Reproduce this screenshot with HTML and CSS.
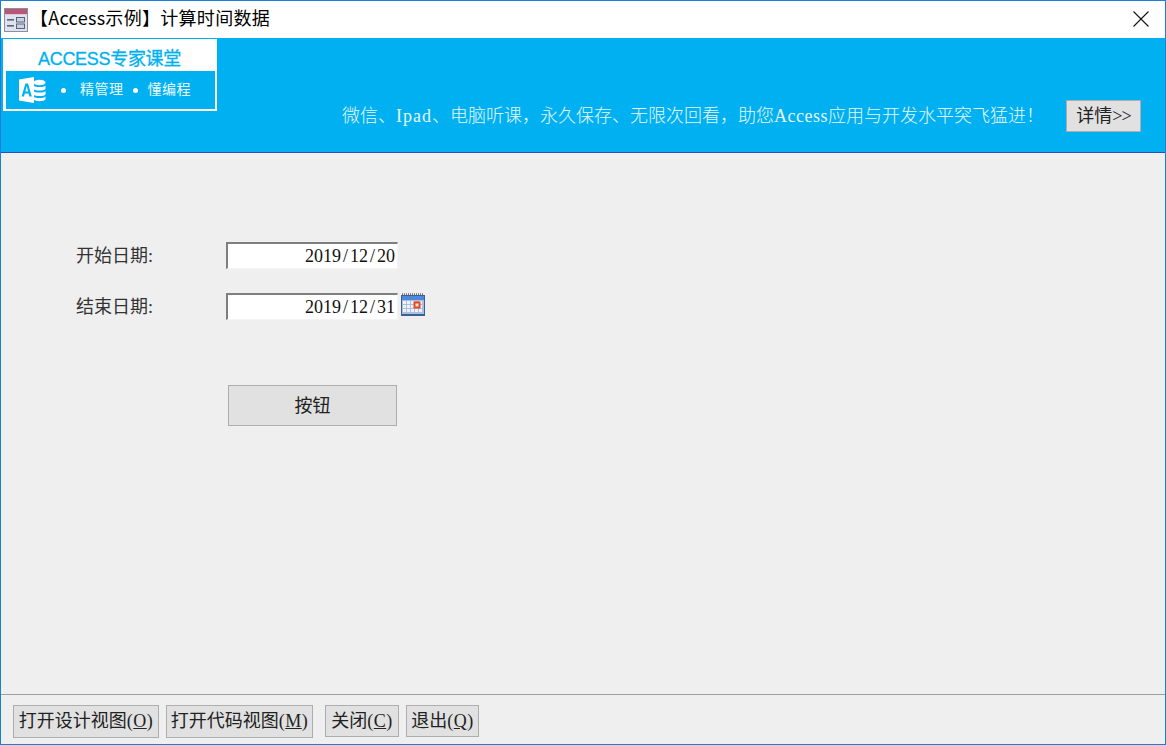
FILE: index.html
```html
<!DOCTYPE html>
<html lang="zh-CN">
<head>
<meta charset="utf-8">
<title>【Access示例】计算时间数据</title>
<link rel="stylesheet" href="styles.css">
</head>
<body>
<div class="window">
  <header class="titlebar">
    <svg class="form-icon" width="24" height="24" viewBox="0 0 24 24">
      <rect x="0.5" y="0.5" width="23" height="23" fill="#dfe3ee" stroke="#8d8d9c"/>
      <rect x="1" y="1" width="22" height="5" fill="#b8577c"/>
      <rect x="1" y="6" width="22" height="1" fill="#e8c3d0"/>
      <rect x="3" y="11" width="7" height="1.6" fill="#5a6478"/>
      <rect x="3" y="17" width="7" height="1.6" fill="#5a6478"/>
      <rect x="12.5" y="9.5" width="8" height="4.5" fill="#c9d2e2" stroke="#5a6478"/>
      <rect x="12.5" y="16" width="8" height="4.5" fill="#c9d2e2" stroke="#5a6478"/>
    </svg>
    <h1 class="title">【Access示例】计算时间数据</h1>
    <svg class="close" width="16" height="16" viewBox="0 0 16 16">
      <path d="M0.5 0.5 15.5 15.5M15.5 0.5 0.5 15.5" stroke="#111" stroke-width="1.1" fill="none"/>
    </svg>
  </header>

  <section class="banner">
    <div class="logo">
      <div class="logo-head"><span class="logo-name">ACCESS专家课堂</span></div>
      <div class="logo-foot">
        <svg class="logo-icon" width="28" height="28" viewBox="0 0 28 28">
          <path d="M1 3.5 16 1V27L1 24.5Z" fill="#fff"/>
          <path d="M3.6 20.5 7.4 7.5H10L13.8 20.5H11.3L10.6 17.6H6.8L6.1 20.5ZM7.3 15.4H10.1L8.7 10Z" fill="#00b0f0"/>
          <ellipse cx="21.5" cy="6.5" rx="6" ry="2.8" fill="#fff"/>
          <path d="M15.5 9.4C17 11.4 26 11.4 27.5 9.4V13C26 15 17 15 15.5 13Z" fill="#fff"/>
          <path d="M15.5 15C17 17 26 17 27.5 15V18.5C26 20.5 17 20.5 15.5 18.5Z" fill="#fff"/>
          <path d="M15.5 20.4C17 22.4 26 22.4 27.5 20.4V23C26 26 17 26 15.5 23Z" fill="#fff"/>
        </svg>
        <span class="dot"></span>
        <span class="slogan">精管理</span>
        <span class="dot"></span>
        <span class="slogan slogan-last">懂编程</span>
      </div>
    </div>
    <p class="promo">微信、<span class="la la-ipad">Ipad</span>、电脑听课，永久保存、无限次回看，助您<span class="la la-access">Access</span>应用与开发水平突飞猛进！</p>
    <button class="btn detail" type="button"><span class="btn-text">详情<span class="la la-gt">&gt;&gt;</span></span></button>
  </section>

  <main class="form">
    <div class="row row-start">
      <label class="field-label">开始日期<span class="la">:</span></label>
      <div class="date">2019<span class="sl">/</span>12<span class="sl">/</span>20</div>
    </div>
    <div class="row row-end">
      <label class="field-label">结束日期<span class="la">:</span></label>
      <div class="date">2019<span class="sl">/</span>12<span class="sl">/</span>31</div>
      <svg class="cal" width="24" height="23" viewBox="0 0 24 23">
        <rect x="0" y="2" width="24" height="21" fill="#3f5f8f"/>
        <rect x="1" y="3" width="22" height="4" fill="#4f86e0"/>
        <rect x="1" y="7" width="22" height="14" fill="#a9c0e2"/>
        <path d="M1 0.5H23" stroke="#8f8f8f" stroke-dasharray="1 1" fill="none"/>
        <path d="M1 1.5H23" stroke="#777" stroke-dasharray="1 1" fill="none"/>
        <g fill="#eef3fb">
          <rect x="2" y="8" width="3" height="3"/><rect x="6" y="8" width="3" height="3"/><rect x="10" y="8" width="3" height="3"/><rect x="18" y="8" width="3" height="3"/>
          <rect x="2" y="12" width="3" height="3"/><rect x="6" y="12" width="3" height="3"/><rect x="10" y="12" width="3" height="3"/><rect x="18" y="12" width="3" height="3"/>
          <rect x="2" y="16" width="3" height="3"/><rect x="6" y="16" width="3" height="3"/><rect x="10" y="16" width="3" height="3"/><rect x="14" y="16" width="3" height="3"/><rect x="18" y="16" width="3" height="3"/>
        </g>
        <rect x="13.5" y="9.5" width="5" height="5" fill="#fbe8d8" stroke="#e8481c" stroke-width="2"/>
      </svg>
    </div>
    <button class="btn action" type="button"><span class="btn-text">按钮</span></button>
  </main>

  <footer class="footer">
    <button class="btn foot foot-design" type="button"><span class="btn-text">打开设计视图<span class="la">(<u>O</u>)</span></span></button>
    <button class="btn foot foot-code" type="button"><span class="btn-text">打开代码视图<span class="la">(<u>M</u>)</span></span></button>
    <button class="btn foot foot-close" type="button"><span class="btn-text">关闭<span class="la">(<u>C</u>)</span></span></button>
    <button class="btn foot foot-quit" type="button"><span class="btn-text">退出<span class="la">(<u>Q</u>)</span></span></button>
  </footer>
</div>
</body>
</html>
```
FILE: styles.css
```css
* { box-sizing: border-box; }
html, body { margin: 0; padding: 0; height: 100%; overflow: hidden; }
body {
  font-family: "Noto Sans CJK SC", "Noto Sans", sans-serif;
  font-size: 18px;
  color: #222;
}
.la { font-family: "Liberation Serif", serif; font-size: 18px; }
.la-ipad { letter-spacing: 1px; }
.la-access { letter-spacing: 0.5px; }
.la-gt { letter-spacing: -1px; }

.window {
  width: 1166px;
  height: 745px;
  display: flex;
  flex-direction: column;
  border: 1px solid #1b7fd6;
  background: #efefef;
}

.titlebar {
  height: 37px;
  flex: none;
  display: flex;
  align-items: center;
  padding: 0 16px 2px 3px;
  background: #fff;
}
.form-icon { flex: none; margin-top: 2px; }
.title {
  margin: 0 0 2px 2px;
  font-size: 18px;
  font-weight: 400;
  color: #000;
  line-height: 33px;
  letter-spacing: 0.3px;
  flex: 1;
}
.close { flex: none; }

.banner {
  height: 115px;
  flex: none;
  display: flex;
  align-items: flex-start;
  padding: 1px 24px 0 2px;
  background: #00b0f0;
  border-bottom: 1px solid #2a4fb8;
}
.logo {
  width: 214px;
  height: 72px;
  flex: none;
  display: flex;
  flex-direction: column;
  background: #fff;
  padding: 0 2px 2px 3px;
}
.logo-head {
  height: 32px;
  display: flex;
  align-items: flex-end;
  justify-content: center;
  padding-right: 2px;
}
.logo-name {
  font-family: "Liberation Sans", "Noto Sans CJK SC", sans-serif;
  font-size: 18px;
  line-height: 24px;
  letter-spacing: -0.3px;
  color: #00b0f0;
  -webkit-text-stroke: 0.3px #00b0f0;
}
.logo-foot {
  height: 38px;
  display: flex;
  align-items: center;
  background: #00b0f0;
  padding-left: 12px;
  color: #eaf8ff;
}
.logo-icon { flex: none; margin-right: 15px; }
.dot {
  width: 5px;
  height: 5px;
  border-radius: 50%;
  background: #fff;
  flex: none;
}
.slogan {
  font-size: 14px;
  letter-spacing: 0.5px;
  line-height: 20px;
  margin: 0 9px 4px 14px;
}
.slogan-last { margin-left: 10px; }

.promo {
  margin: 62px 0 0 125px;
  font-size: 18px;
  line-height: 26px;
  color: #e6f7ff;
  font-weight: 300;
  white-space: nowrap;
  flex: none;
}

.btn {
  font-family: inherit;
  font-size: 18px;
  color: #222;
  background: #e1e1e1;
  border: 1px solid #adadad;
  padding: 0;
  margin: 0;
  white-space: nowrap;
}
.btn-text { display: block; margin-top: -3px; }
.detail {
  width: 75px;
  height: 32px;
  margin: 61px 0 0 auto;
  line-height: 30px;
}
.action {
  display: block;
  width: 169px;
  height: 41px;
  margin: 62px 0 0 152px;
}

.form {
  flex: 1;
  padding: 89px 0 0 75px;
}
.row {
  display: flex;
  align-items: flex-start;
  height: 27px;
}
.row-end { margin-top: 24px; height: 30px; }
.field-label {
  width: 150px;
  flex: none;
  font-size: 18px;
  line-height: 25px;
  color: #333;
}
.date {
  width: 172px;
  height: 27px;
  flex: none;
  background: #fff;
  border-style: solid;
  border-width: 2px 1px 1px 2px;
  border-color: #7f7f7f #f4f4f4 #f4f4f4 #7f7f7f;
  text-align: right;
  padding-right: 2px;
  font-family: "Liberation Serif", serif;
  font-size: 18px;
  line-height: 25px;
  color: #111;
}
.sl { padding: 0 2px; }
.cal { flex: none; margin-left: 3px; }

.footer {
  height: 50px;
  flex: none;
  display: flex;
  align-items: flex-start;
  padding: 10px 0 0 12px;
  border-top: 1px solid #a0a0a0;
}
.foot { height: 33px; line-height: 30px; }
.foot .la { letter-spacing: 0.5px; }
.foot-design { width: 146px; }
.foot-code { width: 147px; margin-left: 7px; }
.foot-close { width: 74px; height: 32px; margin-left: 12px; }
.foot-quit { width: 73px; height: 32px; margin-left: 7px; }
```
